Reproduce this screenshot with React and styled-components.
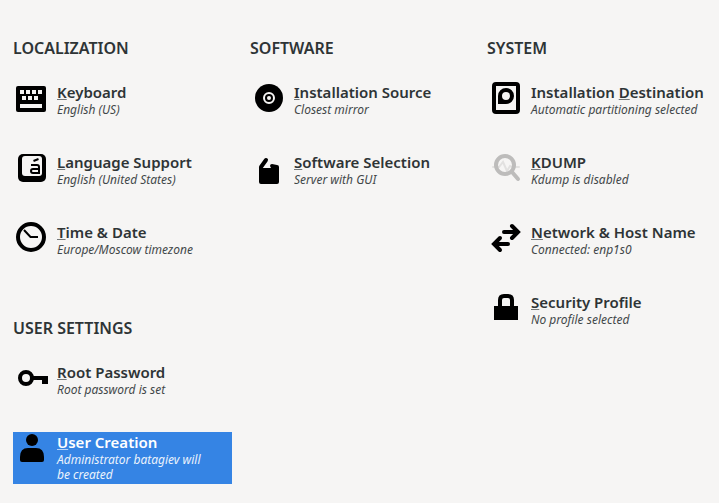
import React, { useState } from "react";
import styled, { createGlobalStyle } from "styled-components";

const GlobalStyle = createGlobalStyle`
  *, *::before, *::after { box-sizing: border-box; }
  body {
    margin: 0;
    background: #f6f5f4;
    color: #2e3436;
    font-family: "Noto Sans", "Open Sans", sans-serif;
  }
`;

const Hub = styled.main`
  display: grid;
  grid-template-columns: repeat(3, minmax(0, 1fr));
  gap: 18px;
  padding: 38px 13px 19px;
`;

const Column = styled.div`
  display: flex;
  flex-direction: column;
  gap: 44px;
`;

const Category = styled.section`
  display: flex;
  flex-direction: column;
  gap: 24px;
`;

const CategoryTitle = styled.h2`
  margin: 0;
  font-size: 16px;
  line-height: 20px;
  font-weight: 600;
`;

const SpokeList = styled.div`
  display: flex;
  flex-direction: column;
  gap: 18px;
`;

const Spoke = styled.button`
  display: flex;
  align-items: flex-start;
  gap: 4px;
  width: 100%;
  min-height: 52px;
  padding: 0;
  border: 0;
  font: inherit;
  text-align: left;
  cursor: pointer;
  background: ${(p) => (p.$selected ? "#3584e4" : "transparent")};
  color: ${(p) => (p.$selected ? "#ffffff" : "#2e3436")};
  &:focus { outline: none; }
  &:focus-visible { outline: 1px dashed currentColor; }
`;

const Icon = styled.svg`
  flex: none;
  width: 40px;
  height: 36px;
  color: #000;
`;

const SpokeText = styled.span`
  display: flex;
  flex-direction: column;
  min-width: 0;
`;

const SpokeTitle = styled.span`
  font-size: 15px;
  line-height: 20px;
  font-weight: 600;
  white-space: nowrap;
`;

const Mnemonic = styled.span`
  text-decoration: underline 1px;
  text-decoration-color: color-mix(in srgb, currentColor 65%, transparent);
  text-decoration-skip-ink: none;
  text-underline-offset: 1px;
`;

const SpokeStatus = styled.span`
  font-size: 12px;
  line-height: 15px;
  font-style: italic;
  white-space: pre;
  opacity: 0.9;
`;

const icons = {
  keyboard: (
    <>
      <rect x="3" y="4" width="30" height="26" rx="2" />
      <path
        fill="#f6f5f4"
        d="M7 8h4v4H7zM13 8h4v4h-4zM19 8h4v4h-4zM25 8h4v4h-4zM9 14h4v4H9zM15 14h4v4h-4zM21 14h4v4h-4zM7 22h22v4H7z"
      />
    </>
  ),
  language: (
    <>
      <rect x="5" y="2" width="28" height="28" rx="5" />
      <rect x="9" y="4" width="20" height="20" rx="3" fill="#f6f5f4" />
      <path
        d="M18 13h6q2 0 2 2v6h-6q-2 0-2-2t2-2h6M20.500 9l5-2"
        fill="none"
        stroke="currentColor"
        strokeWidth="2"
      />
    </>
  ),
  clock: (
    <g fill="none" stroke="currentColor">
      <circle cx="18" cy="15" r="13" strokeWidth="4" />
      <path d="M11 8l6.500 7H25" strokeWidth="2" />
    </g>
  ),
  disc: (
    <>
      <circle cx="19" cy="16" r="14" />
      <circle cx="19" cy="16" r="5" fill="none" stroke="#f6f5f4" strokeWidth="2" />
      <circle cx="19" cy="16" r="2" fill="#f6f5f4" />
    </>
  ),
  software: (
    <>
      <path d="M9 15l4 1h8l-1-2q0-2 2-2l5 1q2 0 2 2v15q0 2-2 2H11q-2 0-2-2z" />
      <path d="M11 15l5-7" fill="none" stroke="currentColor" strokeWidth="4" strokeLinecap="round" />
    </>
  ),
  drive: (
    <>
      <rect x="7" y="2" width="24" height="28" rx="2" fill="none" stroke="currentColor" strokeWidth="4" />
      <path fillRule="evenodd" d="M11 22v-8a8 8 0 1 1 8 8zM19 10a4 4 0 1 0 0 8 4 4 0 0 0 0-8z" />
    </>
  ),
  kdump: (
    <g fill="none" strokeLinecap="round">
      <path d="M6 15h6l4-5 4 9 3-5 2 1h7" stroke="#e2e1e0" strokeWidth="2" />
      <circle cx="18" cy="13" r="9" stroke="#bdbcbb" strokeWidth="4" />
      <path d="M25 20l6 7" stroke="#bdbcbb" strokeWidth="4" />
    </g>
  ),
  network: (
    <g fill="none" stroke="currentColor" strokeWidth="4" strokeLinecap="round">
      <path d="M17 10h12M25 4l6 6-6 6" />
      <path d="M21 22H9M13 16l-6 6 6 6" />
    </g>
  ),
  lock: (
    <>
      <rect x="7" y="14" width="24" height="14" />
      <path d="M13 15V8q0-4 4-4h4q4 0 4 4v7" fill="none" stroke="currentColor" strokeWidth="4" />
    </>
  ),
  key: (
    <>
      <circle cx="13" cy="16" r="6" fill="none" stroke="currentColor" strokeWidth="4" />
      <path d="M20 14h15v8h-6v-4h-9z" />
    </>
  ),
  user: (
    <>
      <circle cx="19" cy="8" r="6" />
      <path d="M15 16h8q8 0 8 9v3q0 2-2 2H9q-2 0-2-2v-3q0-9 8-9z" />
    </>
  ),
};

const columns = [
  [
    {
      title: "LOCALIZATION",
      spokes: [
        { icon: "keyboard", title: "_Keyboard", status: "English (US)" },
        { icon: "language", title: "_Language Support", status: "English (United States)" },
        { icon: "clock", title: "_Time & Date", status: "Europe/Moscow timezone" },
      ],
    },
    {
      title: "USER SETTINGS",
      spokes: [
        { icon: "key", title: "_Root Password", status: "Root password is set" },
        { icon: "user", title: "_User Creation", status: "Administrator batagiev will\nbe created" },
      ],
    },
  ],
  [
    {
      title: "SOFTWARE",
      spokes: [
        { icon: "disc", title: "_Installation Source", status: "Closest mirror" },
        { icon: "software", title: "_Software Selection", status: "Server with GUI" },
      ],
    },
  ],
  [
    {
      title: "SYSTEM",
      spokes: [
        { icon: "drive", title: "Installation _Destination", status: "Automatic partitioning selected" },
        { icon: "kdump", title: "_KDUMP", status: "Kdump is disabled" },
        { icon: "network", title: "_Network & Host Name", status: "Connected: enp1s0" },
        { icon: "lock", title: "_Security Profile", status: "No profile selected" },
      ],
    },
  ],
];

function MnemonicLabel({ text }) {
  const [before, rest] = text.split("_");
  return (
    <SpokeTitle>
      {before}
      <Mnemonic>{rest[0]}</Mnemonic>
      {rest.slice(1)}
    </SpokeTitle>
  );
}

export default function App() {
  const [selected, setSelected] = useState("user");
  return (
    <>
      <GlobalStyle />
      <Hub>
        {columns.map((categories, i) => (
          <Column key={i}>
            {categories.map((category) => (
              <Category key={category.title}>
                <CategoryTitle>{category.title}</CategoryTitle>
                <SpokeList>
                  {category.spokes.map((spoke) => (
                    <Spoke
                      key={spoke.icon}
                      type="button"
                      $selected={selected === spoke.icon}
                      onClick={() => setSelected(spoke.icon)}
                    >
                      <Icon viewBox="0 0 40 36" fill="currentColor" aria-hidden="true">
                        {icons[spoke.icon]}
                      </Icon>
                      <SpokeText>
                        <MnemonicLabel text={spoke.title} />
                        <SpokeStatus>{spoke.status}</SpokeStatus>
                      </SpokeText>
                    </Spoke>
                  ))}
                </SpokeList>
              </Category>
            ))}
          </Column>
        ))}
      </Hub>
    </>
  );
}
